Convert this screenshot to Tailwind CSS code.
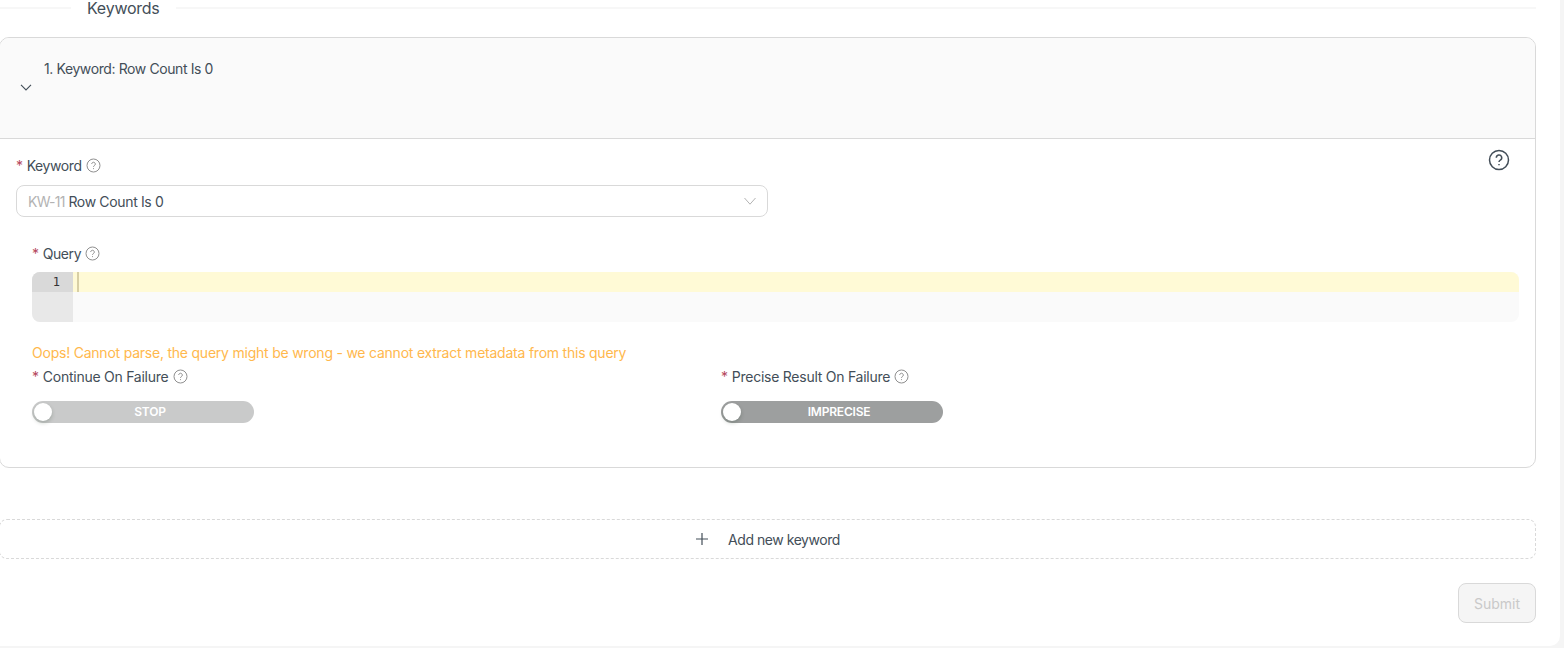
<!DOCTYPE html>
<html lang="en">
<head>
    <meta charset="UTF-8">
    <title>Keywords</title>
    <script src="https://cdn.jsdelivr.net/npm/@tailwindcss/browser@4"></script>
</head>
<body class="bg-[#f5f5f5] h-[648px] overflow-hidden font-['Inter',sans-serif] text-[14px] text-[#434e58]">

    <div class="bg-white w-[1560px] h-[646px] rounded-br-[10px]">
        <!-- section divider -->
        <div class="flex items-center h-4 w-[1536px]">
            <div class="w-[71px] h-0.5 bg-[#f7f7f7]"></div>
            <span class="px-4 text-[16px] leading-4 tracking-[-0.25px]">Keywords</span>
            <div class="flex-1 h-0.5 bg-[#f7f7f7]"></div>
        </div>

        <!-- keyword card -->
        <div class="mt-[21px] -ml-px w-[1537px] h-[431px] border border-[#d9d9d9] rounded-[10px] overflow-hidden">
            <div class="h-[101px] bg-[#fafafa] border-b border-[#d9d9d9] flex pl-5 pt-[22px]">
                <svg class="w-3 h-3 mt-[21px]" viewBox="0 0 12 12" fill="none" stroke="#434e58" stroke-width="1.1">
                    <path d="M1 3.8l5 5.2 5-5.2"/>
                </svg>
                <span class="ml-3 leading-[18px] tracking-[-0.4px]">1. Keyword: Row Count Is 0</span>
            </div>

            <div class="relative pt-4">
                <svg class="absolute right-[25px] top-[10px] w-[22px] h-[22px]" viewBox="0 0 22 22" fill="none" stroke="#434e58" stroke-width="1.5">
                    <circle cx="11" cy="11" r="9.5"/>
                    <path d="M8.3 8.8a2.7 2.7 0 1 1 4 2.3c-.9.5-1.3 1-1.3 2"/>
                    <path d="M11 15v1.3"/>
                </svg>

                <!-- keyword select -->
                <div class="pl-4">
                    <div class="flex items-center gap-1 h-5 tracking-[-0.4px]">
                        <span class="text-[#b5475d]">*</span>
                        <span>Keyword</span>
                        <svg class="w-[15px] h-[15px]" viewBox="0 0 15 15" fill="none" stroke="#8f8f8f" stroke-width="1">
                            <circle cx="7.5" cy="7.5" r="6.5"/>
                            <path d="M5.7 6a1.8 1.8 0 1 1 2.7 1.6c-.6.3-.9.7-.9 1.3M7.5 10.2v.9"/>
                        </svg>
                    </div>
                    <div class="mt-2.5 w-[752px] h-8 border border-[#d9d9d9] rounded-lg flex items-center justify-between px-[11px] tracking-[-0.35px]">
                        <span class="pt-px"><span class="text-[#b3b3b3] tracking-[-0.7px]">KW-11</span> Row Count Is 0</span>
                        <svg class="w-3 h-3" viewBox="0 0 12 12" fill="none" stroke="#b3b3b3" stroke-width="1">
                            <path d="M.5 3l5.5 6.2L11.5 3"/>
                        </svg>
                    </div>
                </div>

                <!-- query editor -->
                <div class="pl-8 pr-4 mt-[26px]">
                    <div class="flex items-center gap-1 h-5 tracking-[-0.4px]">
                        <span class="text-[#b5475d]">*</span>
                        <span>Query</span>
                        <svg class="w-[15px] h-[15px]" viewBox="0 0 15 15" fill="none" stroke="#8f8f8f" stroke-width="1">
                            <circle cx="7.5" cy="7.5" r="6.5"/>
                            <path d="M5.7 6a1.8 1.8 0 1 1 2.7 1.6c-.6.3-.9.7-.9 1.3M7.5 10.2v.9"/>
                        </svg>
                    </div>
                    <div class="mt-[9px] h-[50px] rounded-lg overflow-hidden flex bg-[#fafafa]">
                        <div class="w-[41px] bg-[#e8e8e8]">
                            <div class="h-5 bg-[#d9d9d9] pr-[13px] text-right font-['DejaVu_Sans_Mono',monospace] text-[12px] leading-5 text-[#333]">1</div>
                        </div>
                        <div class="flex-1">
                            <div class="h-5 bg-[#fffad6] pl-1">
                                <div class="w-0.5 h-5 bg-[#d8cfa5]"></div>
                            </div>
                        </div>
                    </div>
                    <p class="mt-[21px] leading-5 text-[#ffb84d] tracking-[-0.225px]">Oops! Cannot parse, the query might be wrong - we cannot extract metadata from this query</p>
                </div>

                <!-- switches -->
                <div class="pl-8 mt-[3px] flex">
                    <div class="w-[689px]">
                        <div class="flex items-center gap-1 h-5 tracking-[-0.25px]">
                            <span class="text-[#b5475d]">*</span>
                            <span>Continue On Failure</span>
                            <svg class="w-[15px] h-[15px]" viewBox="0 0 15 15" fill="none" stroke="#8f8f8f" stroke-width="1">
                                <circle cx="7.5" cy="7.5" r="6.5"/>
                                <path d="M5.7 6a1.8 1.8 0 1 1 2.7 1.6c-.6.3-.9.7-.9 1.3M7.5 10.2v.9"/>
                            </svg>
                        </div>
                        <div class="mt-[15px] w-[222px] h-[22px] rounded-full bg-[#c9caca] flex items-center pl-0.5">
                            <div class="w-[18px] h-[18px] rounded-full bg-white shadow-[0_2px_4px_rgba(0,35,11,0.2)]"></div>
                            <span class="flex-1 pr-[6px] text-center text-[12px] font-semibold text-white tracking-[-0.2px]">STOP</span>
                        </div>
                    </div>
                    <div>
                        <div class="flex items-center gap-1 h-5 tracking-[-0.25px]">
                            <span class="text-[#b5475d]">*</span>
                            <span>Precise Result On Failure</span>
                            <svg class="w-[15px] h-[15px]" viewBox="0 0 15 15" fill="none" stroke="#8f8f8f" stroke-width="1">
                                <circle cx="7.5" cy="7.5" r="6.5"/>
                                <path d="M5.7 6a1.8 1.8 0 1 1 2.7 1.6c-.6.3-.9.7-.9 1.3M7.5 10.2v.9"/>
                            </svg>
                        </div>
                        <div class="mt-[15px] w-[222px] h-[22px] rounded-full bg-[#9d9f9f] flex items-center pl-0.5">
                            <div class="w-[18px] h-[18px] rounded-full bg-white shadow-[0_2px_4px_rgba(0,35,11,0.2)]"></div>
                            <span class="flex-1 pr-[6px] text-center text-[12px] font-semibold text-white tracking-[-0.2px]">IMPRECISE</span>
                        </div>
                    </div>
                </div>
            </div>
        </div>

        <!-- add keyword -->
        <div class="mt-[51px] -ml-px w-[1537px] h-10 border border-dashed border-[#d9d9d9] rounded-lg flex items-center justify-center gap-[19px] tracking-[-0.45px]">
            <svg class="w-[14px] h-[14px]" viewBox="0 0 14 14" fill="none" stroke="#434e58" stroke-width="1.2">
                <path d="M7 1v12M1 7h12"/>
            </svg>
            <span class="pt-px">Add new keyword</span>
        </div>

        <div class="mt-6 w-[1536px] flex justify-end">
            <button disabled class="w-[78px] h-10 border border-[#d9d9d9] rounded-lg bg-[#f5f5f5] text-[#c9c9c9]">Submit</button>
        </div>
    </div>

</body>
</html>
